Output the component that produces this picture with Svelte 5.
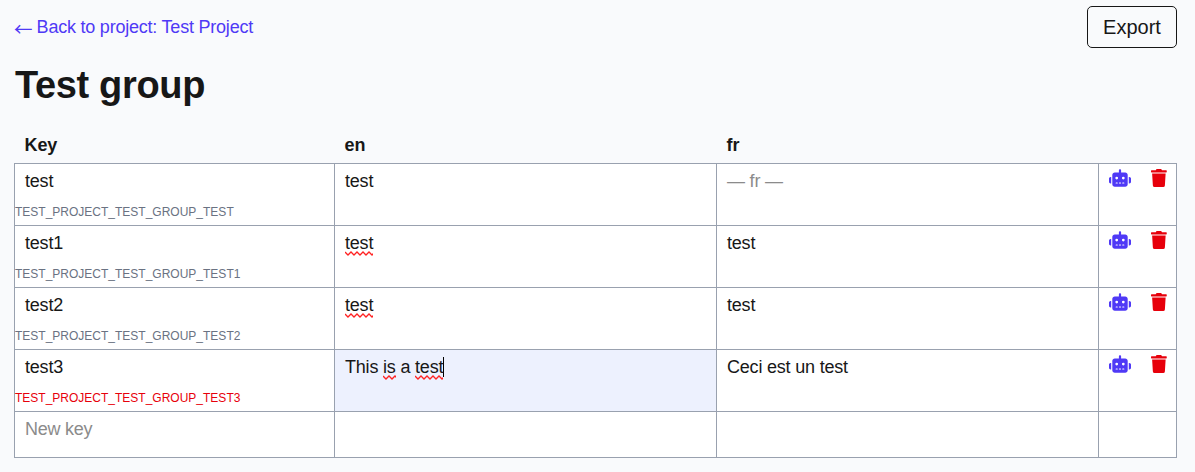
<script>
  const rows = [
    { key: 'test', id: 'TEST_PROJECT_TEST_GROUP_TEST', en: [['test']], fr: 'test', emptyFr: true },
    { key: 'test1', id: 'TEST_PROJECT_TEST_GROUP_TEST1', en: [['test', 28]], fr: 'test' },
    { key: 'test2', id: 'TEST_PROJECT_TEST_GROUP_TEST2', en: [['test', 28]], fr: 'test' },
    { key: 'test3', id: 'TEST_PROJECT_TEST_GROUP_TEST3', en: [['This '], ['is', 13], [' a '], ['test', 28]], fr: 'Ceci est un test', active: true }
  ];

  function wave(width) {
    let d = 'M0 1';
    for (let x = 3, i = 0; x <= width + 3; x += 3, i++) d += ` L${x} ${i % 2 ? 1 : 4}`;
    return d;
  }
</script>

<main>
  <header>
    <a href="#project"><span class="arrow">←</span>Back to project: Test Project</a>
    <button class="export">Export</button>
  </header>
  <h1>Test group</h1>
  <div class="grid head">
    <div>Key</div><div>en</div><div>fr</div><div></div>
  </div>
  <div class="table">
    {#each rows as row}
      <div class="grid row">
        <div class="cell">
          <div class="value">{row.key}</div>
          <div class="id" class:changed={row.active}>{row.id}</div>
        </div>
        <div class="cell" class:active={row.active}>
          <div class="value">{#each row.en as [text, width]}{#if width}<span class="spell">{text}<svg {width} height="5" viewBox="0 0 {width} 5"><path d={wave(width)} /></svg></span>{:else}{text}{/if}{/each}{#if row.active}<i class="caret"></i>{/if}</div>
        </div>
        <div class="cell">
          <div class="value" class:muted={row.emptyFr}>{row.emptyFr ? '— fr —' : row.fr}</div>
        </div>
        <div class="cell actions">
          <svg class="robot" width="22" height="18" viewBox="0 0 640 512"><path d="M320 0c17.700 0 32 14.300 32 32V96H472c39.800 0 72 32.200 72 72V440c0 39.800-32.200 72-72 72H168c-39.800 0-72-32.200-72-72V168c0-39.800 32.200-72 72-72H288V32c0-17.700 14.300-32 32-32zM208 384c-8.800 0-16 7.200-16 16s7.200 16 16 16h32c8.800 0 16-7.200 16-16s-7.200-16-16-16H208zm96 0c-8.800 0-16 7.200-16 16s7.200 16 16 16h32c8.800 0 16-7.200 16-16s-7.200-16-16-16H304zm96 0c-8.800 0-16 7.200-16 16s7.200 16 16 16h32c8.800 0 16-7.200 16-16s-7.200-16-16-16H400zM264 256a40 40 0 1 0-80 0 40 40 0 1 0 80 0zm152 40a40 40 0 1 0 0-80 40 40 0 1 0 0 80zM48 224H64V416H48c-26.500 0-48-21.500-48-48V272c0-26.500 21.500-48 48-48zm544 0c26.500 0 48 21.500 48 48v96c0 26.500-21.500 48-48 48H576V224h16z" /></svg>
          <svg class="trash" width="15.75" height="18" viewBox="0 0 448 512"><path d="M432 32H312L302.600 13.300A24 24 0 0 0 281.100 0H166.800A23.720 23.720 0 0 0 145.400 13.300L136 32H16A16 16 0 0 0 0 48V80A16 16 0 0 0 16 96H432A16 16 0 0 0 448 80V48A16 16 0 0 0 432 32ZM53.200 467A48 48 0 0 0 101.100 512H346.900A48 48 0 0 0 394.800 467L416 128H32Z" /></svg>
        </div>
      </div>
    {/each}
    <div class="grid row last">
      <div class="cell"><div class="value muted new">New key</div></div>
      <div class="cell"></div><div class="cell"></div><div class="cell"></div>
    </div>
  </div>
</main>

<style>
  :global(body) { background: #f9fafc; }
  main { box-sizing: border-box; height: 472px; padding: 6px 18px 0 14px; font: 18px/28px "Liberation Sans", Arial, sans-serif; color: #171717; overflow: hidden; }
  header { display: flex; justify-content: space-between; align-items: center; height: 42px; }
  a { display: flex; color: #4f39f6; text-decoration: none; white-space: pre; letter-spacing: -0.22px; }
  .arrow { width: 22.6px; padding-top: 1px; height: 27px; font-family: "Noto Sans CJK JP", sans-serif; font-size: 18.5px; }
  .export { box-sizing: border-box; width: 90px; height: 42px; padding: 0; border: 1px solid #171717; border-radius: 5px; background: transparent; color: inherit; font: 20px/28px "Liberation Sans", Arial, sans-serif; }
  h1 { margin: 17px 0 0 1px; font-size: 38px; line-height: 40px; letter-spacing: -0.35px; }
  .grid { display: grid; grid-template-columns: 320px 382px 382px 78px; }
  .head { margin-top: 26px; height: 32px; font-weight: 700; letter-spacing: -0.1px; }
  .head div { padding-left: 10.5px; }
  .table { width: 1163px; box-sizing: border-box; border-top: 1px solid #99a1af; border-left: 1px solid #99a1af; background: white; }
  .row { height: 62px; }
  .last { height: 46px; }
  .cell { border-right: 1px solid #99a1af; border-bottom: 1px solid #99a1af; box-sizing: border-box; }
  .value { padding: 3px 10px 0; height: 28px; white-space: pre; letter-spacing: -0.2px; }
  .new { letter-spacing: -0.25px; }
  .id { margin-top: 8px; font-size: 12px; line-height: 18px; color: #6a7282; }
  .changed { color: #e7000b; }
  .active { background: #edf1fe; }
  .muted { color: #8b8b8b; }
  .spell { position: relative; }
  .spell svg { position: absolute; left: 0; top: 17.5px; fill: none; stroke: #f22; stroke-width: 1.3; overflow: hidden; }
  .caret { display: inline-block; width: 1px; height: 20px; background: #000; vertical-align: -4px; }
  .actions { display: flex; align-items: flex-start; padding: 5px 9px 0 10px; justify-content: space-between; }
  .robot { fill: #4f39f6; }
  .trash { fill: #e7000b; }
</style>
